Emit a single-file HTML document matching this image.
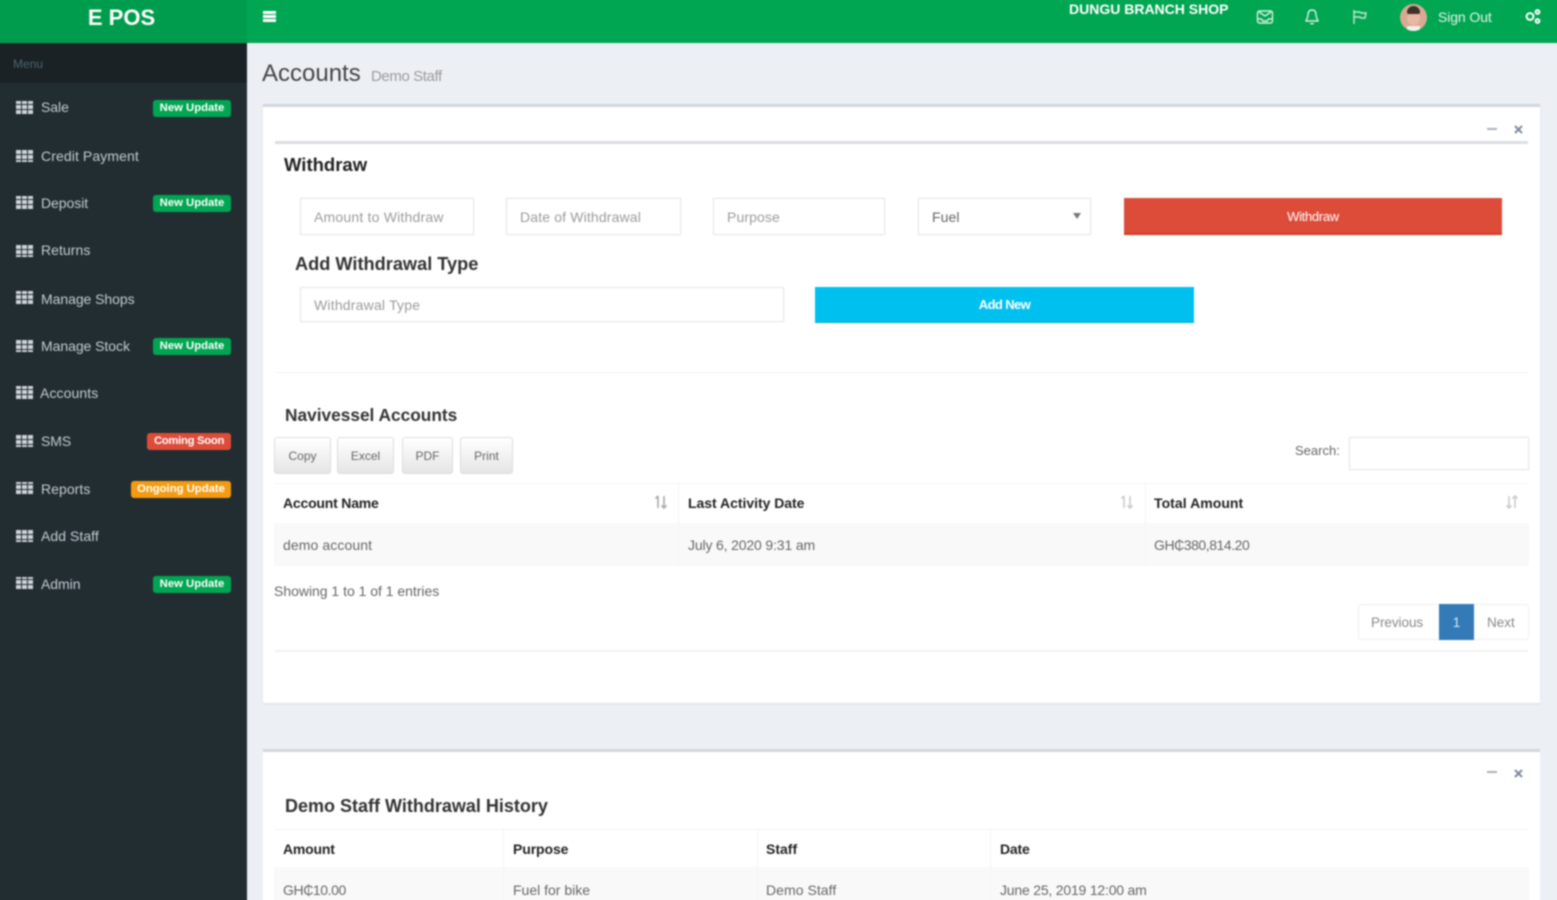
<!DOCTYPE html>
<html lang="en">
<head>
<meta charset="utf-8">
<title>Accounts</title>
<style>
*{box-sizing:border-box}
html,body{margin:0;padding:0;width:1557px;height:900px;overflow:hidden;background:#ecf0f5}
body{font-family:"Liberation Sans",sans-serif;color:#333}
#o{position:absolute;left:0;top:0;width:1557px;height:900px;overflow:hidden;contain:paint}
#w{position:absolute;left:-10px;top:-10px;width:1577px;height:920px;overflow:hidden;filter:blur(.75px);background:#ecf0f5}
#c{left:10px;top:10px;width:1557px;height:900px}
#w div,#w svg{position:absolute}
.t{line-height:20px;height:20px;white-space:nowrap;font-size:14px}
.nav{color:#c3ccd0;font-size:14px;left:41px;letter-spacing:-.05px}
.badge{height:17px;line-height:17px;border-radius:3px;color:#fff;font-size:11.3px;font-weight:700;text-align:center;white-space:nowrap}
.g{background:#00a651;left:153px;width:78px}
.inp{background:#fff;border:1px solid #e6e7e9;box-shadow:0 0 2px rgba(0,0,0,.06);color:#9b9b9b;font-size:14px;padding-left:13px;white-space:nowrap;letter-spacing:.1px}
.btn{top:437px;height:37px;line-height:36px;background:linear-gradient(#fff,#e5e5e5);border:1px solid #ddd;border-radius:3px;text-align:center;font-size:12px;color:#666}
.b{font-weight:700;color:#222}
.line{height:1px;background:#f1f1f1}
</style>
</head>
<body>
<div id="o"><div id="w"><div id="c">
  <!-- top bar -->
  <div style="left:247px;top:-10px;width:1320px;height:53px;background:#00a651"></div>
  <div style="left:-10px;top:-10px;width:257px;height:53px;background:#009c4d"></div>
  <div class="t" style="left:0;top:8px;width:243px;text-align:center;color:#fff;font-size:22px;font-weight:700">E POS</div>
  <div style="left:263px;top:11px;width:13px;height:2.5px;background:#fff"></div>
  <div style="left:263px;top:15px;width:13px;height:2.5px;background:#fff"></div>
  <div style="left:263px;top:19px;width:13px;height:2.5px;background:#fff"></div>
  <div class="t" style="left:1069px;top:-1px;color:#fff;font-weight:700;font-size:14px;letter-spacing:0">DUNGU BRANCH SHOP</div>
  <svg style="left:1256px;top:9px" width="18" height="16" viewBox="0 0 18 16" fill="none" stroke="#d8f0e2" stroke-width="1.4"><rect x="1.5" y="2" width="15" height="12" rx="2"/><path d="M1.5 10h4l1.5 2h4l1.5-2h4M3 3l6 4 6-4"/></svg>
  <svg style="left:1304px;top:8px" width="16" height="18" viewBox="0 0 16 18" fill="none" stroke="#d8f0e2" stroke-width="1.4"><path d="M8 2c-3 0-4 2-4 5 0 3-2 5-2 6h12c0-1-2-3-2-6 0-3-1-5-4-5z"/><path d="M6.500 15a1.700 1.700 0 0 0 3 0"/></svg>
  <svg style="left:1352px;top:9px" width="16" height="16" viewBox="0 0 16 16" fill="none" stroke="#c6e8d3" stroke-width="1.4"><path d="M2 1v14M2 3h6l1 1h5l-1 5H9L8 8H2"/></svg>
  <div style="left:1400px;top:4px;width:27px;height:27px;border-radius:50%;background:#d9a994;overflow:hidden">
    <div style="left:7px;top:8px;width:13px;height:13px;border-radius:50%;background:#e8b8a2"></div>
    <div style="left:7px;top:2px;width:13px;height:8px;border-radius:7px 7px 2px 2px;background:#3f302b"></div>
    <div style="left:7px;top:22px;width:13px;height:6px;background:#f3efee"></div>
  </div>
  <div class="t" style="left:1438px;top:7px;color:#e4f5eb;font-size:14px;letter-spacing:-.1px">Sign Out</div>
  <svg style="left:1524px;top:8px" width="18" height="17" viewBox="0 0 18 17" fill="none" stroke="#fff" stroke-width="2"><circle cx="6" cy="8.500" r="3.400"/><circle cx="13.500" cy="4" r="1.900"/><circle cx="13.500" cy="13" r="1.900"/></svg>

  <!-- sidebar -->
  <div style="left:-10px;top:43px;width:257px;height:867px;background:#222d32"></div>
  <div style="left:-10px;top:44px;width:257px;height:39px;background:#1a2226"></div>
  <div class="t" style="left:13px;top:54px;color:#4b646f;font-size:12px">Menu</div>

  <svg style="left:0;top:0" width="40" height="600" fill="#cdd4d7">
    <defs><pattern id="p" x="16" y="0" width="6" height="5" patternUnits="userSpaceOnUse"><rect width="5" height="4"/></pattern></defs>
    <rect x="16" y="101" width="17" height="13" fill="url(#p)"/>
    <rect x="16" y="149" width="17" height="13" fill="url(#p)"/>
    <rect x="16" y="196" width="17" height="13" fill="url(#p)"/>
    <rect x="16" y="244" width="17" height="13" fill="url(#p)"/>
    <rect x="16" y="291" width="17" height="13" fill="url(#p)"/>
    <rect x="16" y="339" width="17" height="13" fill="url(#p)"/>
    <rect x="16" y="386" width="17" height="13" fill="url(#p)"/>
    <rect x="16" y="434" width="17" height="13" fill="url(#p)"/>
    <rect x="16" y="482" width="17" height="13" fill="url(#p)"/>
    <rect x="16" y="529" width="17" height="13" fill="url(#p)"/>
    <rect x="16" y="577" width="17" height="13" fill="url(#p)"/>
  </svg>

  <div class="t nav" style="top:97px">Sale</div>
  <div class="t nav" style="top:146px;letter-spacing:.1px">Credit Payment</div>
  <div class="t nav" style="top:193px">Deposit</div>
  <div class="t nav" style="top:240px;letter-spacing:.05px">Returns</div>
  <div class="t nav" style="top:289px">Manage Shops</div>
  <div class="t nav" style="top:336px">Manage Stock</div>
  <div class="t nav" style="top:383px;left:40px;letter-spacing:.1px">Accounts</div>
  <div class="t nav" style="top:431px">SMS</div>
  <div class="t nav" style="top:479px;letter-spacing:.05px">Reports</div>
  <div class="t nav" style="top:526px;letter-spacing:.05px">Add Staff</div>
  <div class="t nav" style="top:574px">Admin</div>

  <div class="badge g" style="top:100px">New Update</div>
  <div class="badge g" style="top:195px">New Update</div>
  <div class="badge g" style="top:338px">New Update</div>
  <div class="badge" style="top:433px;left:147px;width:84px;background:#dd4b39;letter-spacing:-.3px">Coming Soon</div>
  <div class="badge" style="top:481px;left:131px;width:100px;background:#f39c12">Ongoing Update</div>
  <div class="badge g" style="top:576px">New Update</div>

  <!-- heading -->
  <div class="t" style="left:262px;top:64px;font-size:24px;color:#444;letter-spacing:0">Accounts</div>
  <div class="t" style="left:371px;top:67px;font-size:15px;color:#9a9a9a;letter-spacing:-.4px">Demo Staff</div>

  <!-- box 1 -->
  <div style="left:263px;top:104px;width:1277px;height:599px;background:#fff;border-top:3px solid #d2d6de;box-shadow:0 1px 2px rgba(0,0,0,.08)"></div>
  <div style="left:275px;top:141px;width:1253px;height:3px;background:#dcdee1"></div>
  <div style="left:1487px;top:128px;width:10px;height:2px;background:#a9b0bc"></div>
  <svg style="left:1513px;top:124px" width="11" height="11" viewBox="0 0 11 11" stroke="#7f8a9e" stroke-width="2"><path d="M2 2l7 7M9 2l-7 7"/></svg>

  <div class="t" style="left:284px;top:155px;font-size:18.500px;font-weight:700;color:#222">Withdraw</div>
  <div class="inp" style="left:300px;top:198px;width:174px;height:37px;line-height:36px;letter-spacing:.2px">Amount to Withdraw</div>
  <div class="inp" style="left:506px;top:198px;width:175px;height:37px;line-height:36px;letter-spacing:.15px">Date of Withdrawal</div>
  <div class="inp" style="left:713px;top:198px;width:172px;height:37px;line-height:36px">Purpose</div>
  <div class="inp" style="left:918px;top:198px;width:173px;height:37px;line-height:36px;color:#666">Fuel</div>
  <svg style="left:1073px;top:213px" width="8" height="6" viewBox="0 0 8 6" fill="#777"><path d="M0 0h8L4 6z"/></svg>
  <div style="left:1124px;top:198px;width:378px;height:37px;line-height:37px;background:#dd4b39;border-bottom:2px solid #d73925;color:#fff;text-align:center;font-size:13px;letter-spacing:-.3px">Withdraw</div>

  <div class="t" style="left:295px;top:254px;font-size:18.200px;font-weight:700;color:#333">Add Withdrawal Type</div>
  <div class="inp" style="left:300px;top:287px;width:484px;height:35px;line-height:34px;letter-spacing:.2px">Withdrawal Type</div>
  <div style="left:815px;top:287px;width:379px;height:36px;line-height:35px;background:#00c0ef;border-bottom:1px solid #00acd6;color:#fff;text-align:center;font-size:13px;font-weight:700;letter-spacing:-.6px">Add New</div>
  <div class="line" style="left:275px;top:372px;width:1253px"></div>

  <div class="t" style="left:285px;top:405px;font-size:17.300px;font-weight:700;color:#333">Navivessel Accounts</div>
  <div class="btn" style="left:274px;width:57px">Copy</div>
  <div class="btn" style="left:337px;width:57px">Excel</div>
  <div class="btn" style="left:402px;width:51px">PDF</div>
  <div class="btn" style="left:460px;width:53px">Print</div>
  <div class="t" style="left:1295px;top:441px;font-size:13px;color:#666">Search:</div>
  <div class="inp" style="left:1349px;top:437px;width:180px;height:33px"></div>

  <div style="left:274px;top:483px;width:1255px;height:1px;background:#f4f4f4"></div>
  <div style="left:274px;top:523px;width:1255px;height:43px;background:#f9f9f9"></div>
  <div style="left:678px;top:484px;width:1px;height:82px;background:#f4f4f4"></div>
  <div style="left:1145px;top:484px;width:1px;height:82px;background:#f4f4f4"></div>
  <div class="t b" style="left:283px;top:493px;font-size:14px;letter-spacing:-.2px">Account Name</div>
  <div class="t b" style="left:688px;top:493px;font-size:14px;letter-spacing:-.03px">Last Activity Date</div>
  <div class="t b" style="left:1154px;top:493px;font-size:14px;letter-spacing:.05px">Total Amount</div>
  <svg style="left:654px;top:495px" width="14" height="14" viewBox="0 0 14 14" fill="none" stroke="#aaa" stroke-width="1.600"><path d="M4 13V1M1.500 3.500L4 1M10 1v12M7.500 10.500L10 13l2.500-2.500"/></svg>
  <svg style="left:1120px;top:495px" width="14" height="14" viewBox="0 0 14 14" fill="none" stroke="#ccc" stroke-width="1.600"><path d="M4 13V1M1.500 3.500L4 1M10 1v12M7.500 10.500L10 13l2.500-2.500"/></svg>
  <svg style="left:1505px;top:495px" width="14" height="14" viewBox="0 0 14 14" fill="none" stroke="#ccc" stroke-width="1.600"><path d="M4 1v12M1.500 10.500L4 13l2.500-2.500M10 13V1M7.500 3.500L10 1l2.500 2.500"/></svg>
  <div class="t" style="left:283px;top:535px;color:#666;letter-spacing:.1px">demo account</div>
  <div class="t" style="left:688px;top:535px;color:#666;letter-spacing:-.15px">July 6, 2020 9:31 am</div>
  <div class="t" style="left:1154px;top:535px;color:#666;letter-spacing:-.45px">GH₵380,814.20</div>
  <div class="t" style="left:274px;top:581px;color:#666;letter-spacing:-.02px">Showing 1 to 1 of 1 entries</div>

  <div style="left:1358px;top:604px;width:171px;height:36px;background:#fff;border:1px solid #eee;border-radius:3px"></div>
  <div class="t" style="left:1371px;top:613px;color:#888;font-size:13.500px;letter-spacing:-.05px">Previous</div>
  <div style="left:1439px;top:604px;width:35px;height:36px;line-height:36px;background:#337ab7;color:#d8e6f2;text-align:center;font-size:14px">1</div>
  <div class="t" style="left:1487px;top:613px;color:#888;font-size:13.500px">Next</div>
  <div class="line" style="left:275px;top:650px;width:1253px;height:2px"></div>

  <!-- box 2 -->
  <div style="left:263px;top:749px;width:1277px;height:161px;background:#fff;border-top:3px solid #d2d6de"></div>
  <div style="left:1487px;top:771px;width:10px;height:2px;background:#a9b0bc"></div>
  <svg style="left:1513px;top:768px" width="11" height="11" viewBox="0 0 11 11" stroke="#7f8a9e" stroke-width="2"><path d="M2 2l7 7M9 2l-7 7"/></svg>
  <div class="t" style="left:285px;top:796px;font-size:18px;font-weight:700;color:#333">Demo Staff Withdrawal History</div>
  <div style="left:274px;top:829px;width:1255px;height:1px;background:#f4f4f4"></div>
  <div style="left:274px;top:867px;width:1255px;height:43px;background:#f9f9f9"></div>
  <div style="left:503px;top:830px;width:1px;height:80px;background:#f4f4f4"></div>
  <div style="left:757px;top:830px;width:1px;height:80px;background:#f4f4f4"></div>
  <div style="left:990px;top:830px;width:1px;height:80px;background:#f4f4f4"></div>
  <div class="t b" style="left:283px;top:839px;letter-spacing:-.2px">Amount</div>
  <div class="t b" style="left:513px;top:839px;letter-spacing:-.1px">Purpose</div>
  <div class="t b" style="left:766px;top:839px;letter-spacing:0">Staff</div>
  <div class="t b" style="left:1000px;top:839px;letter-spacing:-.2px">Date</div>
  <div class="t" style="left:283px;top:880px;color:#666;letter-spacing:-.4px">GH₵10.00</div>
  <div class="t" style="left:513px;top:880px;color:#666;letter-spacing:0">Fuel for bike</div>
  <div class="t" style="left:766px;top:880px;color:#666;letter-spacing:.05px">Demo Staff</div>
  <div class="t" style="left:1000px;top:880px;color:#666;letter-spacing:-.2px">June 25, 2019 12:00 am</div>
</div></div></div>
</body>
</html>
